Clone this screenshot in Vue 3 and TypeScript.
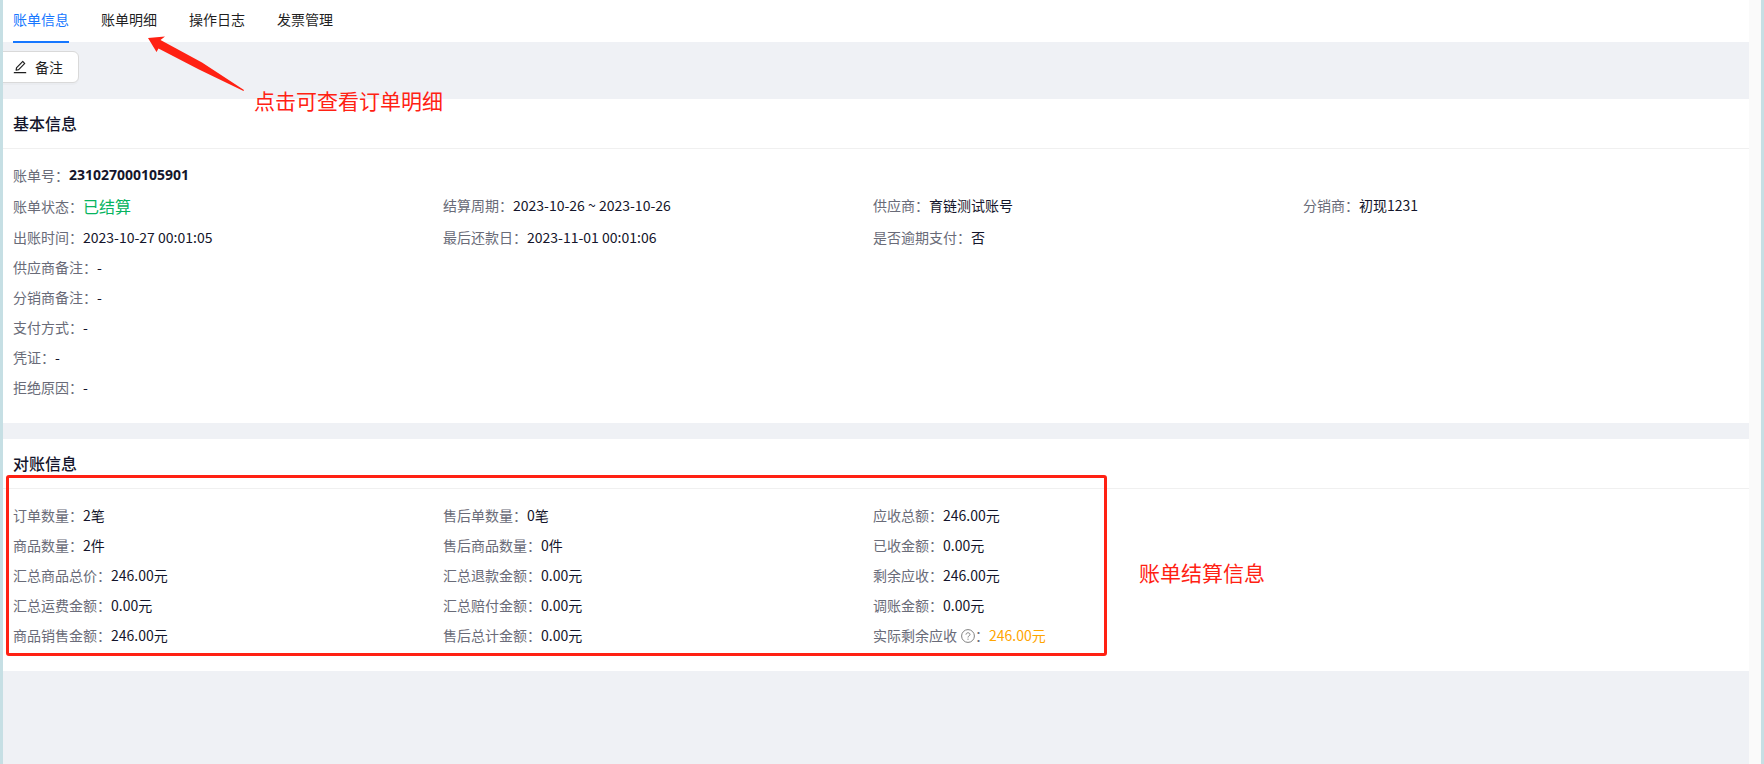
<script setup lang="ts">
import { ref } from 'vue'

interface Field {
  label: string
  value: string
  tone?: 'strong' | 'success' | 'warning'
  help?: boolean
}

const tabs: string[] = ['账单信息', '账单明细', '操作日志', '发票管理']
const active = ref(0)

const basicRows: Field[][] = [
  [{ label: '账单号', value: '231027000105901', tone: 'strong' }],
  [
    { label: '账单状态', value: '已结算', tone: 'success' },
    { label: '结算周期', value: '2023-10-26 ~ 2023-10-26' },
    { label: '供应商', value: '育链测试账号' },
    { label: '分销商', value: '初现1231' },
  ],
  [
    { label: '出账时间', value: '2023-10-27 00:01:05' },
    { label: '最后还款日', value: '2023-11-01 00:01:06' },
    { label: '是否逾期支付', value: '否' },
  ],
  [{ label: '供应商备注', value: '-' }],
  [{ label: '分销商备注', value: '-' }],
  [{ label: '支付方式', value: '-' }],
  [{ label: '凭证', value: '-' }],
  [{ label: '拒绝原因', value: '-' }],
]

const checkRows: Field[][] = [
  [
    { label: '订单数量', value: '2笔' },
    { label: '售后单数量', value: '0笔' },
    { label: '应收总额', value: '246.00元' },
  ],
  [
    { label: '商品数量', value: '2件' },
    { label: '售后商品数量', value: '0件' },
    { label: '已收金额', value: '0.00元' },
  ],
  [
    { label: '汇总商品总价', value: '246.00元' },
    { label: '汇总退款金额', value: '0.00元' },
    { label: '剩余应收', value: '246.00元' },
  ],
  [
    { label: '汇总运费金额', value: '0.00元' },
    { label: '汇总赔付金额', value: '0.00元' },
    { label: '调账金额', value: '0.00元' },
  ],
  [
    { label: '商品销售金额', value: '246.00元' },
    { label: '售后总计金额', value: '0.00元' },
    { label: '实际剩余应收', value: '246.00元', tone: 'warning', help: true },
  ],
]

const sections = [
  { title: '基本信息', rows: basicRows, note: '' },
  { title: '对账信息', rows: checkRows, note: '账单结算信息' },
]
</script>

<template>
  <div class="frame">
    <main class="page">
      <nav class="tabs">
        <button
          v-for="(tab, i) in tabs"
          :key="tab"
          type="button"
          class="tab"
          :class="{ active: i === active }"
          @click="active = i"
        >
          {{ tab }}
        </button>
      </nav>

      <div class="toolbar">
        <button type="button" class="remark">
          <svg viewBox="64 64 896 896" width="14" height="14" fill="currentColor" aria-hidden="true">
            <path d="M257.700 752c2 0 4-.2 6-.5L431.900 722c2-.4 3.900-1.300 5.300-2.800l423.900-423.900a9.960 9.960 0 000-14.100L694.900 114.900c-1.900-1.900-4.400-2.900-7.100-2.900s-5.200 1-7.100 2.900L256.800 538.800c-1.500 1.500-2.400 3.300-2.800 5.300l-29.500 168.200a33.500 33.500 0 009.400 29.800c6.600 6.400 14.900 9.900 23.800 9.900zm67.400-174.400L687.800 215l73.300 73.300-362.700 362.600-88.900 15.700 15.600-89zM880 836H144c-17.700 0-32 14.300-32 32v36c0 4.400 3.600 8 8 8h784c4.400 0 8-3.600 8-8v-36c0-17.700-14.300-32-32-32z" />
          </svg>
          备注
        </button>
      </div>

      <section v-for="section in sections" :key="section.title" class="card">
        <h2 class="title">{{ section.title }}</h2>
        <div class="body">
          <dl v-for="(row, r) in section.rows" :key="r" class="row">
            <div v-for="field in row" :key="field.label" class="field" :class="field.tone">
              <dt>
                {{ field.label
                }}<svg v-if="field.help" class="help" viewBox="0 0 14 14" width="14" height="14" fill="none" stroke="currentColor" aria-hidden="true">
                  <circle cx="7" cy="7" r="6.400" />
                  <path d="M5 5.600C5 3.200 9 3.200 9 5.500 9 6.900 7 6.800 7 8.500" />
                  <path d="M7 9.600V10.800" /></svg>：
              </dt>
              <dd>{{ field.value }}</dd>
            </div>
          </dl>
        </div>
        <template v-if="section.note">
          <div class="outline"></div>
          <p class="note note-check">{{ section.note }}</p>
        </template>
      </section>

      <svg class="arrow" viewBox="0 0 98 56" width="98" height="56" aria-hidden="true">
        <path d="M1 2L18 .5L13.500 4L55 26.500L97 54L96.500 55L52 33.500L11.500 12.500L9.500 16Z" fill="#ff2113" />
      </svg>
      <p class="note note-tab">点击可查看订单明细</p>
    </main>
    <div class="gutter"></div>
  </div>
</template>

<style>
body {
  margin: 0;
}
</style>

<style scoped>
.frame {
  display: flex;
  box-sizing: border-box;
  min-height: 100vh;
  border: solid #c6dfe4;
  border-width: 0 3px;
  color: #14152b;
  font-family: "Noto Sans CJK SC", sans-serif;
  font-size: 14px;
  line-height: 22px;
}

.page {
  position: relative;
  flex: 1;
  min-width: 0;
  overflow: hidden;
  background: #eff1f5;
}

.gutter {
  width: 12px;
  background: #fafafa;
}

.tabs {
  display: flex;
  gap: 32px;
  height: 42px;
  padding-left: 10px;
  background: #fff;
}

.tab {
  height: 43px;
  padding: 0 0 4px;
  border: 0;
  border-bottom: 2px solid transparent;
  background: none;
  color: #1f1f1f;
  font: inherit;
  cursor: pointer;
}

.tab.active {
  border-color: #1677ff;
  color: #1677ff;
}

.toolbar {
  display: flex;
  padding: 9px 0 16px;
}

.remark {
  display: flex;
  align-items: center;
  gap: 8px;
  height: 32px;
  margin-left: -6px;
  padding: 0 15px;
  border: 1px solid #d9d9d9;
  border-radius: 6px;
  background: #fff;
  box-shadow: 0 2px 0 rgba(0, 0, 0, 0.02);
  color: #1f1f1f;
  font: inherit;
  cursor: pointer;
}

.card {
  position: relative;
  margin-bottom: 16px;
  background: #fff;
}

.title {
  margin: 0;
  padding: 12px 10px 13px;
  border-bottom: 1px solid #f0f0f0;
  font-size: 16px;
  font-weight: 500;
  line-height: 24px;
}

.body {
  padding: 15px 16px 17px 10px;
}

.row {
  display: grid;
  grid-template-columns: repeat(4, 1fr);
  margin: 0;
  padding-bottom: 8px;
}

.field {
  display: flex;
  white-space: nowrap;
}

dt {
  color: #696b78;
}

dd {
  margin: 0;
}

.strong dd {
  font-family: "Noto Sans", sans-serif;
  font-weight: 700;
}

.success {
  line-height: 24px;
}

.success dd {
  color: #07b45f;
  font-size: 16px;
}

.warning dd {
  color: #ffa500;
}

.help {
  margin-left: 4px;
  color: #808080;
  vertical-align: -2px;
}

.outline {
  position: absolute;
  top: 36px;
  right: 642px;
  bottom: 15px;
  left: 3px;
  border: 3px solid #ff2113;
  border-radius: 3px;
}

.note {
  position: absolute;
  margin: 0;
  color: #ff2113;
  font-size: 21px;
  line-height: 30px;
  white-space: nowrap;
}

.note-check {
  top: 118px;
  right: 484px;
}

.note-tab {
  top: 85px;
  left: 251px;
}

.arrow {
  position: absolute;
  top: 36px;
  left: 144px;
}
</style>
